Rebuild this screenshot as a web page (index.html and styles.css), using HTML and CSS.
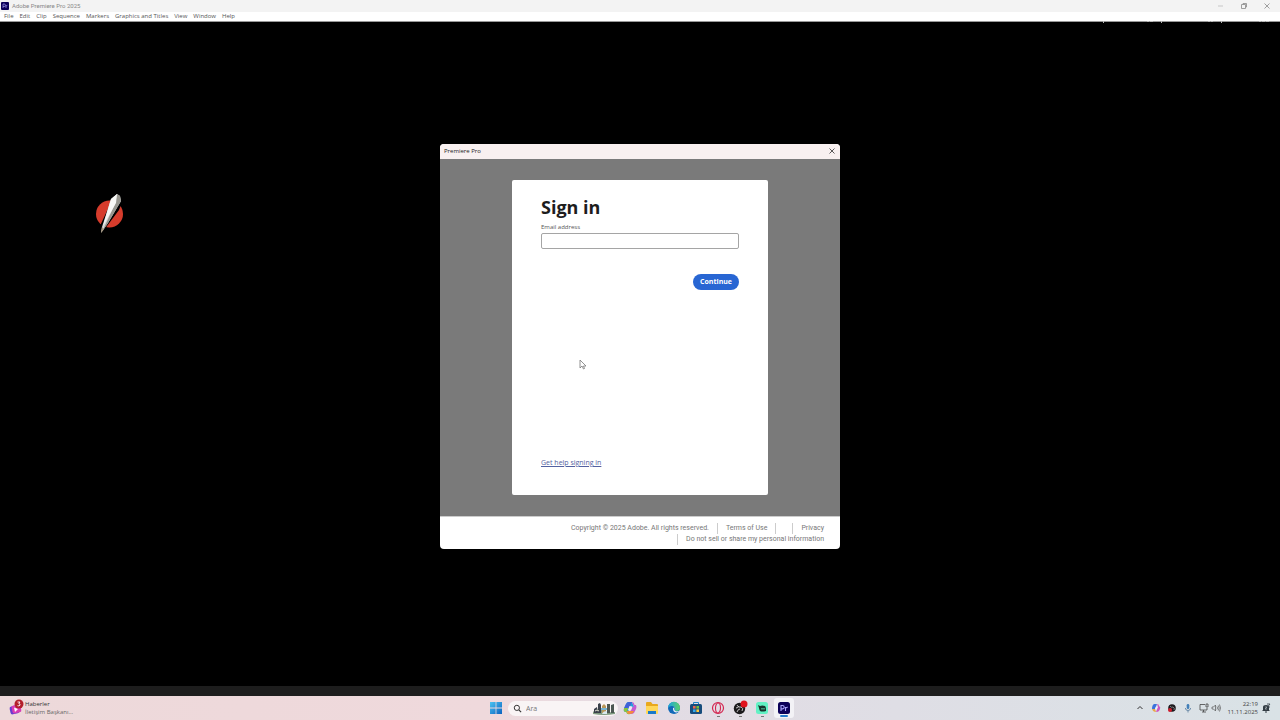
FILE: index.html
```html
<!DOCTYPE html>
<html lang="tr">
<head>
  <meta charset="UTF-8">
  <meta name="viewport" content="width=device-width, initial-scale=1.0">
  <title>Adobe Premiere Pro 2025</title>
  <link rel="stylesheet" href="styles.css">
</head>
<body>
  <!-- Application window -->
  <header class="titlebar">
    <svg class="app-icon" viewBox="0 0 24 24" aria-hidden="true"><rect width="24" height="24" rx="3" fill="#0b0058"/><path d="M6 18V6h3.500a3.500 3.500 0 0 1 0 7.500H6M15 18v-8M15 13q1-3 4-3" fill="none" stroke="#a9a2f5" stroke-width="2"/></svg>
    <span class="app-title">Adobe Premiere Pro 2025</span>
    <div class="window-buttons">
      <button aria-label="Minimize"><svg viewBox="0 0 8 8"><path d="M1 4h5" stroke="#bbb"/></svg></button>
      <button aria-label="Restore"><svg viewBox="0 0 8 8"><path d="M1.500 2.500h4v4h-4zM3 2.500V1.500h3.500V5H5.500"/></svg></button>
      <button aria-label="Close"><svg viewBox="0 0 8 8"><path d="M1.500 1.500l5 5M6.500 1.500l-5 5"/></svg></button>
    </div>
  </header>
  <nav class="menubar">
    <button>File</button>
    <button>Edit</button>
    <button>Clip</button>
    <button>Sequence</button>
    <button>Markers</button>
    <button>Graphics and Titles</button>
    <button>View</button>
    <button>Window</button>
    <button>Help</button>
  </nav>

  <main class="workspace">
    <svg class="panel-edge" viewBox="0 0 180 3" aria-hidden="true"><path d="M3.500 0v2M61.500 0v2M121.500 0v2M47 .5h2M50 .5h3M108 .5h2M111 .5h2M159 .5h2M162 .5h3M166 .5h3" stroke="#bbb" fill="none"/></svg>
    <svg class="pen-logo" viewBox="0 0 32 44" aria-hidden="true">
      <circle cx="15.500" cy="24" r="13.500" fill="#d63c2c"/>
      <path d="M19 8L29 10 25 20 13 36 6 45 5 38Z" fill="#000"/>
      <path d="M23 4L17 9 8 37 7 43 14 33 27 11 26 6Z" fill="#d9d9d7"/>
      <path d="M23 4L26 6 27 11 14 33 8 42 21 14Z" fill="#97968f"/>
      <path d="M23 4L17 9 9 36 22 13Z" fill="#f8f8f6"/>
      <path d="M8 37L7 43 10 39Z" fill="#a6957c"/>
    </svg>

    <section class="dialog" role="dialog" aria-label="Premiere Pro">
      <div class="dialog-title">
        <span>Premiere Pro</span>
        <button class="dialog-close" aria-label="Close"><svg viewBox="0 0 8 8"><path d="M1.500 1.500l5 5M6.500 1.500l-5 5"/></svg></button>
      </div>
      <div class="dialog-body">
        <form class="signin">
          <h1>Sign in</h1>
          <label for="email">Email address</label>
          <input type="email" id="email" name="email">
          <button type="button" class="continue">Continue</button>
          <a class="help" href="#">Get help signing in</a>
        </form>
      </div>
      <footer class="legal">
        <div class="legal-row">
          <span>Copyright © 2025 Adobe. All rights reserved.</span>
          <a href="#">Terms of Use</a>
          <span class="empty"></span>
          <a href="#">Privacy</a>
        </div>
        <div class="legal-row">
          <a href="#">Do not sell or share my personal information</a>
        </div>
      </footer>
    </section>

    <svg class="cursor" viewBox="0 0 8 11" aria-hidden="true"><path d="M1 1v8l2-2 1.500 3 1-.5L4.500 7H7Z" fill="#fff" stroke="#777" stroke-width=".8"/></svg>
  </main>
  <div class="status-strip"></div>

  <!-- Windows taskbar -->
  <footer class="taskbar">
    <button class="widget">
      <svg viewBox="0 0 16 18" aria-hidden="true">
        <rect x="2" y="7" width="9" height="8" rx="2" fill="#6a3bd0" transform="rotate(-12 6 11)"/>
        <rect x="4" y="6" width="9" height="8" rx="2" fill="#d83bb4" transform="rotate(-12 8 10)"/>
        <path d="M6 8.500l4 1.500-3 3z" fill="#fff"/>
        <circle cx="11" cy="5" r="4.500" fill="#b3202b"/>
        <path d="M9.500 3h2.500L10.800 4.500q1.700.3 1.200 1.700-.9 1.100-2.500.5" fill="none" stroke="#fff" stroke-width=".9"/>
      </svg>
      <span class="widget-text"><span>Haberler</span><span class="sub">İletişim Başkanı...</span></span>
    </button>

    <div class="apps">
      <button class="app" aria-label="Start"><svg viewBox="0 0 16 16"><defs><linearGradient id="win" x2="1" y2="1"><stop stop-color="#4cc3f1"/><stop offset="1" stop-color="#0a63c0"/></linearGradient></defs><path d="M2 2h5.600v5.600H2zM8.400 2H14v5.600H8.400zM2 8.400h5.600V14H2zM8.400 8.400H14V14H8.400z" fill="url(#win)"/></svg></button>
      <label class="search">
        <svg class="lens" viewBox="0 0 10 10" aria-hidden="true"><circle cx="4.300" cy="4.300" r="2.900" fill="none" stroke="#333" stroke-width="1.100"/><path d="M6.500 6.500L9 9" stroke="#333" stroke-width="1.200"/></svg>
        <input type="text" placeholder="Ara" aria-label="Ara">
        <svg class="scene" viewBox="0 0 24 13" aria-hidden="true">
          <path d="M1 10q2-3 5-3t6 2 11 1v2q-11 2-22 0z" fill="#7f9a80"/>
          <path d="M2 7l3-2 1 6H2zM6 2l2-1 1 2v8H6z" fill="#39404a"/>
          <path d="M10 4l2-2 2 2v7h-4z" fill="#b9985a"/><path d="M9 6h6v2H9z" fill="#77b3d0"/>
          <path d="M15 2h3v9h-3zM19 3l3-1v9h-3z" fill="#4c5752"/>
          <path d="M10 12q1-3 5-3v3z" fill="#d8e9ef"/><path d="M3 9q2-2 4 0" fill="none" stroke="#e3e0d0"/>
        </svg>
      </label>
      <button class="app" aria-label="Copilot"><svg viewBox="0 0 16 16"><path d="M6 2h4l2 5H8L6 12H4Q1 12 2 9l2-5Q5 2 6 2" fill="#249ed8"/><path d="M4 4Q5 2 7 2h3L7 8H2z" fill="#4261d8"/><path d="M2 8h4l-1 4 3 2q-3 1-4-2-3 0-2-4" fill="#8bc43f"/><path d="M10 2q2 0 2.500 3H14q1 2 0 4l-2 4q-1 1-3 1H7l3-7h2z" fill="#c65ad0"/><path d="M5 11h7l-1 2q-1 1-4 1-2 0-2-3" fill="#f38b3c"/><path d="M6 10L7.500 6l3 .5L9 10.500z" fill="#f2eaf2"/></svg></button>
      <button class="app" aria-label="File Explorer"><svg viewBox="0 0 16 16"><path d="M2 3q0-1 1-1h4l1.500 2H13q1 0 1 1v8H2z" fill="#e9a81d"/><path d="M2 6h12v7q0 1-1 1H3q-1 0-1-1z" fill="#ffd75a"/><path d="M4 11h8v3H4z" fill="#1979ca"/></svg></button>
      <button class="app" aria-label="Edge"><svg viewBox="0 0 16 16"><defs><linearGradient id="edge" x2="1"><stop stop-color="#1ba4e0"/><stop offset="1" stop-color="#5dd269"/></linearGradient></defs><circle cx="8" cy="8" r="6" fill="#1269b8"/><path d="M2 8a6 6 0 0 1 12-.5Q14 11 10.500 11 8 10.500 9 8.500 8.500 5.500 5.500 6 2.500 6.500 2 8" fill="url(#edge)"/><path d="M8.500 7.500Q7.500 10.500 10.500 11.300 13 11.600 13.600 10.600 12.500 12.800 10 12.600 6.500 11.500 7 8z" fill="#e1ecf3"/></svg></button>
      <button class="app" aria-label="Microsoft Store"><svg viewBox="0 0 16 16"><path d="M5.500 5V2.500h5V5" fill="none" stroke="#1d85ca"/><rect x="2" y="4" width="12" height="10" rx="1.500" fill="#164c7c"/><path d="M5 6h2.600v2.600H5z" fill="#ef6550"/><path d="M8.400 6H11v2.600H8.400z" fill="#77bd3b"/><path d="M5 9.400h2.600V12H5z" fill="#35a8ea"/><path d="M8.400 9.400H11V12H8.400z" fill="#ffc83d"/></svg></button>
      <button class="app running" aria-label="Opera GX"><svg viewBox="0 0 16 16"><circle cx="8" cy="8" r="5.500" fill="none" stroke="#d32650" stroke-width="1.200"/><ellipse cx="8" cy="8" rx="2.500" ry="5" fill="none" stroke="#d32650" stroke-width="1.100"/></svg></button>
      <button class="app running" aria-label="OBS Studio"><svg viewBox="0 0 16 16"><circle cx="7.500" cy="8.500" r="5.700" fill="#1b1a1c"/><path d="M5 5q1 3 4 2 3 1 1 4M8 9q-2 0-3 3M4 8q2 0 3-2" fill="none" stroke="#d4d1d4" stroke-width=".9"/><circle cx="12" cy="4" r="3.500" fill="#e0131e"/></svg></button>
      <button class="app running" aria-label="Streamlabs"><svg viewBox="0 0 16 16"><rect x="2" y="2" width="12" height="12" rx="2.500" fill="#62f1c4"/><path d="M4 5l2 1q2-1 5 0 1 1 1 3v2q-4 1-6 0Q5 9 5 8z" fill="#17342d"/><path d="M8 8v1.500M10 8v1.500" stroke="#62f1c4"/></svg></button>
      <button class="app active" aria-label="Premiere Pro"><svg viewBox="0 0 16 16"><rect x="2" y="2" width="12" height="12" rx="2.500" fill="#0b0058"/><path d="M5 11V5.500h1.500a1.600 1.600 0 0 1 0 3.400H5M9.500 11V7M9.500 8.500Q10 7 11.800 7.300" fill="none" stroke="#aaa4fb" stroke-width="1.100"/></svg></button>
    </div>

    <div class="tray">
      <button aria-label="Show hidden icons"><svg viewBox="0 0 10 10"><path d="M2.500 6L5 3.500 7.500 6" fill="none" stroke="#333"/></svg></button>
      <button aria-label="Copilot"><svg viewBox="0 0 10 10"><path d="M3 1h3L4 6H1q0-4 2-5" fill="#3b72dc"/><path d="M6 1q2 0 2 2 2 1 1 3L8 8q-1 1-3 1l2-5z" fill="#cf57c0"/><path d="M1 6h3l1 3Q2 9 1 6" fill="#e9a845"/><path d="M4 6l1-2.500 1.500.5-1 2.500z" fill="#eef"/></svg></button>
      <button aria-label="OBS Studio"><svg viewBox="0 0 10 10"><circle cx="5" cy="5" r="3.800" fill="#1d1a1e"/><path d="M3 3q1 2 3 1 2 1 1 3" fill="none" stroke="#bbb" stroke-width=".6"/><circle cx="3" cy="7" r="2" fill="#cf1d2d"/></svg></button>
      <button aria-label="Microphone"><svg viewBox="0 0 10 10"><rect x="3.700" y="1" width="2.600" height="5" rx="1.300" fill="#427fb8"/><path d="M2.300 5q.2 2.500 2.700 2.500T7.700 5M5 7.500V9.500" fill="none" stroke="#55789a" stroke-width=".8"/></svg></button>
      <button aria-label="Network"><svg viewBox="0 0 10 10"><path d="M6 1.500H1v5.500h7V5M3 9h4M4.500 7v2M7 1h2v3H7z" fill="none" stroke="#444" stroke-width=".8"/></svg></button>
      <button class="volume" aria-label="Volume"><svg viewBox="0 0 10 10"><path d="M1 4h1.500L4.500 2v6L2.500 6H1zM6 3.500q1 1.500 0 3M7.300 2.500q1.700 2.500 0 5M8.500 1.500q2 3.500 0 7" fill="none" stroke="#555" stroke-width=".7"/></svg></button>
      <div class="clock"><time>22:19</time><time>11.11.2025</time></div>
      <button class="bell" aria-label="Notifications"><svg viewBox="0 0 10 10"><path d="M2 7V4q0-2 3-2 3 0 3 2v3l1 1H1z" fill="#333d45"/><path d="M4 9h2" stroke="#333d45"/><path d="M6 1h3L6.500 4H9" fill="none" stroke="#333d45" stroke-width=".8"/><path d="M4 4h2L4 6h2" fill="none" stroke="#d8e0e3" stroke-width=".5"/></svg></button>
    </div>
  </footer>
</body>
</html>
```
FILE: styles.css
```css
* {
  box-sizing: border-box;
}

body {
  margin: 0;
  height: 100vh;
  display: flex;
  flex-direction: column;
  overflow: hidden;
  background-color: #000;
  font-family: "Open Sans", "Noto Sans", sans-serif;
  font-size: 6px;
}

button {
  padding: 0;
  border: none;
  background: none;
  color: inherit;
  font: inherit;
}

svg {
  display: block;
}

/* Application window */
.titlebar {
  display: flex;
  align-items: center;
  gap: 3px;
  height: 12px;
  padding: 0 9px 1px 1px;
  background-color: #f3f3f3;
  color: #888;
  font-family: Roboto, sans-serif;
}

.app-icon {
  width: 8px;
  height: 8px;
}

.window-buttons {
  display: flex;
  gap: 15px;
  margin-left: auto;
}

.window-buttons svg,
.dialog-close svg {
  width: 8px;
  height: 8px;
  fill: none;
  stroke: #888;
  stroke-width: 0.8;
}

.menubar {
  display: flex;
  align-items: center;
  gap: 6px;
  height: 10px;
  padding: 0 4px;
  border-bottom: 1px solid #999;
  background-color: #fff;
  color: #555;
  line-height: 9px;
}

.workspace {
  position: relative;
  flex: 1;
  display: flex;
  align-items: center;
  justify-content: center;
  padding-bottom: 15px;
}

.panel-edge {
  position: absolute;
  top: -1px;
  right: 0;
  width: 180px;
  height: 3px;
}

.pen-logo {
  position: absolute;
  top: 168px;
  left: 94px;
  width: 32px;
  height: 44px;
}

.cursor {
  position: absolute;
  top: 337px;
  left: 579px;
  width: 8px;
  height: 11px;
}

/* Sign in dialog */
.dialog {
  width: 400px;
  border-radius: 4px;
  overflow: hidden;
  background-color: #fff;
}

.dialog-title {
  display: flex;
  align-items: center;
  justify-content: space-between;
  height: 15px;
  padding: 0 4px 1px;
  background-color: #f8f0f0;
  color: #222;
}

.dialog-close svg {
  stroke: #333;
}

.dialog-body {
  padding: 21px 72px;
  background-color: #7a7a7a;
}

.signin {
  display: flex;
  flex-direction: column;
  align-items: flex-start;
  min-height: 315px;
  padding: 15px 29px 26px;
  border-radius: 2px;
  background-color: #fff;
}

.signin h1 {
  margin: 0;
  color: #1d1d1d;
  font-size: 18px;
  line-height: 24px;
}

.signin label {
  margin-top: 3px;
  color: #555;
  line-height: 10px;
}

.signin input {
  width: 100%;
  height: 16px;
  margin-top: 1px;
  padding: 0 4px;
  border: 1px solid #a5a5a5;
  border-radius: 2px;
  background-color: #fff;
  font: inherit;
}

.continue {
  align-self: flex-end;
  height: 16px;
  margin-top: 25px;
  padding: 0 7px 1px;
  border-radius: 8px;
  background-color: #2866d3;
  color: #fff;
  font-size: 7px;
  font-weight: bold;
}

.help {
  margin-top: auto;
  color: #5361a0;
  font-size: 7px;
  line-height: 12px;
}

.legal {
  padding: 6px 16px 4px 0;
  border-top: 1px solid #ccc;
  color: #777;
  font-family: Roboto, sans-serif;
  font-size: 7px;
  line-height: 11px;
}

.legal-row {
  display: flex;
  justify-content: flex-end;
}

.legal-row > * {
  height: 11px;
  padding-left: 8px;
  margin-left: 8px;
  border-left: 1px solid #ccc;
}

.legal-row > span:first-child {
  border-left: none;
}

.legal a {
  color: inherit;
  text-decoration: none;
}

.status-strip {
  height: 10px;
  background-color: #1d1d1d;
}

/* Taskbar */
.taskbar {
  display: grid;
  grid-template-columns: 1fr auto 1fr;
  align-items: center;
  height: 24px;
  background: linear-gradient(90deg, #edd9da, #efd9dc 38%, #e3dce4 50%, #dfdee5 70%, #d9e2e6);
  color: #333;
}

.widget {
  display: flex;
  align-items: center;
  gap: 1px;
  padding-left: 8px;
  text-align: left;
}

.widget svg {
  width: 16px;
  height: 18px;
}

.widget-text {
  display: flex;
  flex-direction: column;
  line-height: 8px;
}

.sub {
  color: #666;
}

.apps {
  display: flex;
  align-items: center;
  gap: 2px;
}

.app {
  position: relative;
  width: 20px;
  height: 20px;
  padding: 2px;
  border-radius: 3px;
}

.app svg {
  width: 16px;
  height: 16px;
}

.app.active {
  background-color: #f3f2f6;
}

/* open-window mark below the icon */
.running::after,
.active::after {
  content: "";
  position: absolute;
  bottom: 1px;
  left: 9px;
  width: 3px;
  height: 1px;
  background-color: #777;
}

.active::after {
  left: 6px;
  width: 8px;
  height: 2px;
  border-radius: 1px;
  background-color: #247bcc;
}

.search {
  display: flex;
  align-items: center;
  gap: 4px;
  width: 110px;
  height: 15px;
  padding: 0 2px 0 5px;
  border-radius: 8px;
  background-color: #f9f4f5;
}

.lens {
  flex: none;
  width: 9px;
  height: 9px;
}

.search input {
  flex: 1;
  min-width: 0;
  padding: 0;
  border: none;
  background: none;
  font: inherit;
  font-size: 7px;
}

.search input::placeholder {
  color: #777;
}

.scene {
  flex: none;
  width: 24px;
  height: 13px;
}

.tray {
  display: flex;
  align-items: center;
  justify-content: flex-end;
  gap: 6px;
  padding-right: 9px;
}

.tray svg {
  width: 10px;
  height: 10px;
}

.tray .volume {
  margin-left: -4px;
}

.clock {
  display: flex;
  flex-direction: column;
  align-items: flex-end;
  color: #444;
  line-height: 8px;
}

.tray .bell {
  margin-left: -3px;
}
```
